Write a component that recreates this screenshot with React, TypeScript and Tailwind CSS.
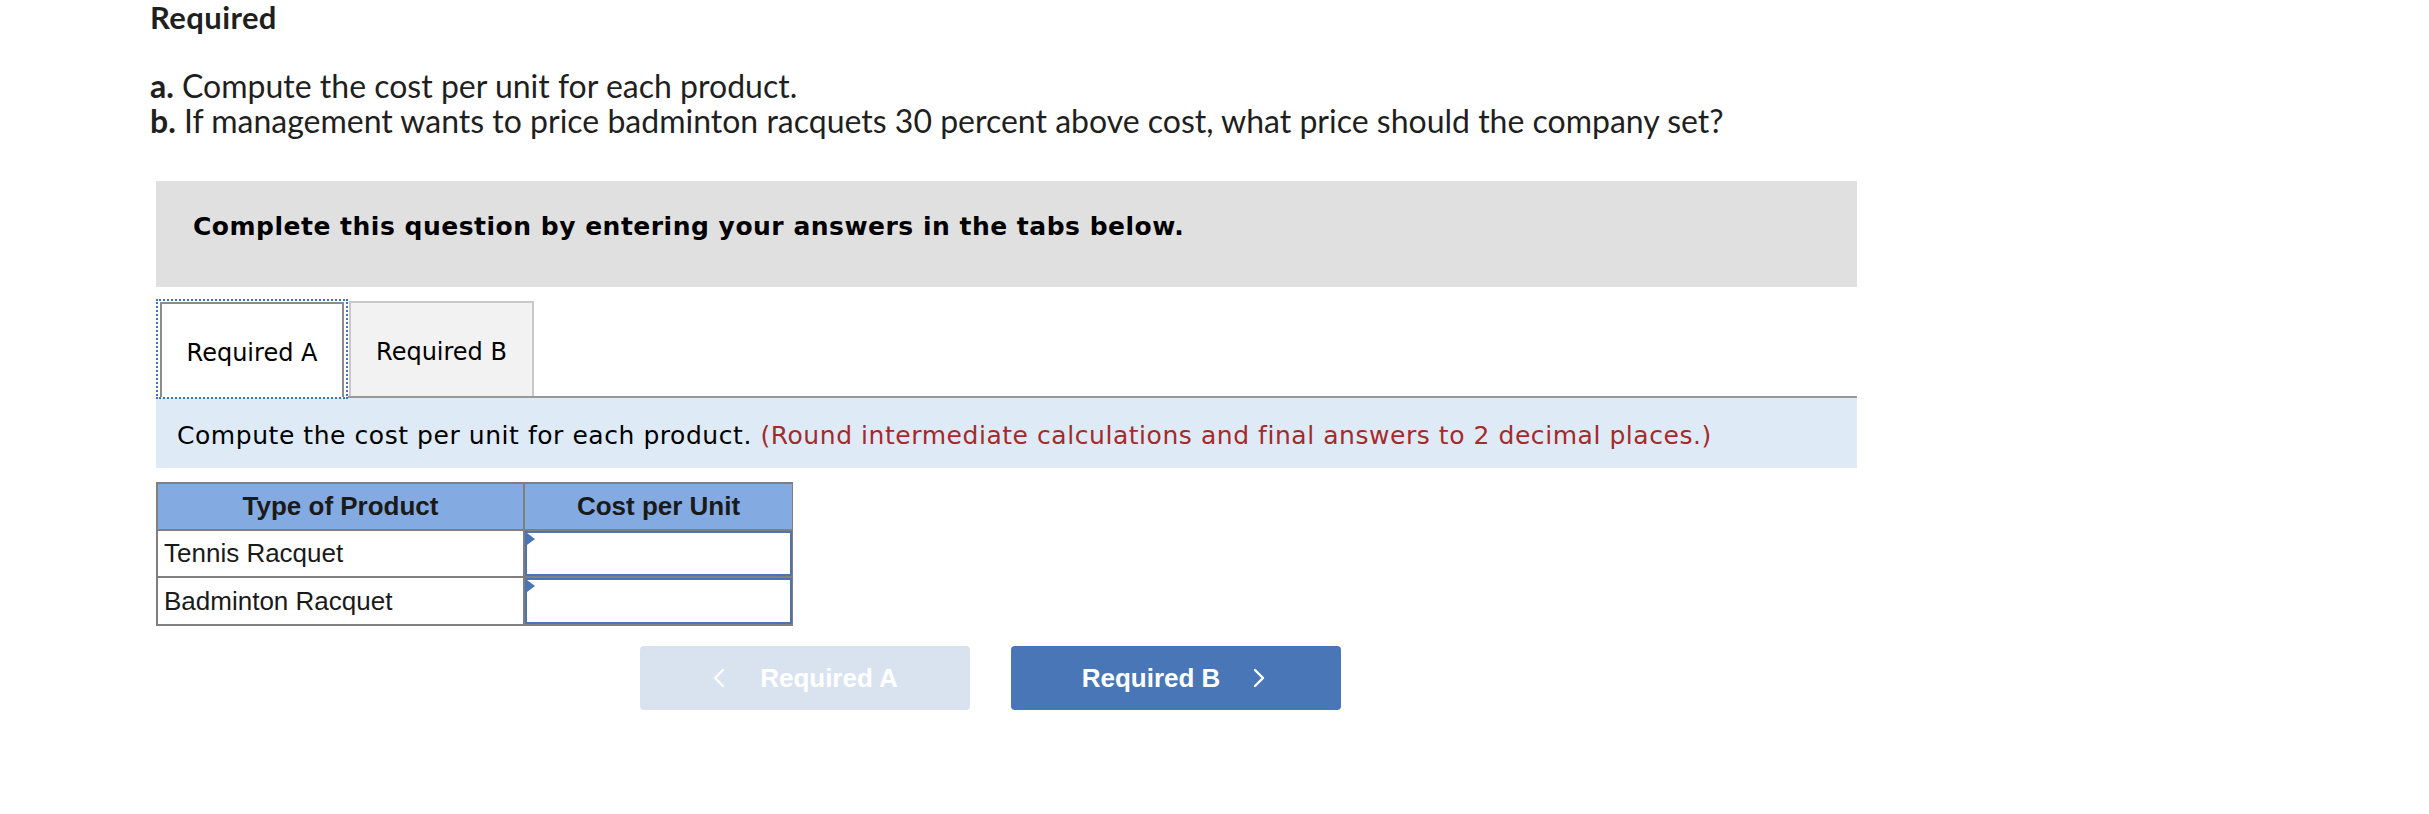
import React from "react";

function Chevron({ dir }: { dir: "left" | "right" }) {
  return (
    <svg width="14" height="22" viewBox="0 0 14 22" fill="none" className="shrink-0">
      {dir === "left" ? (
        <polyline points="11,3 3,11 11,19" stroke="white" strokeWidth="2.4" strokeLinecap="round" strokeLinejoin="round" />
      ) : (
        <polyline points="3,3 11,11 3,19" stroke="white" strokeWidth="2.4" strokeLinecap="round" strokeLinejoin="round" />
      )}
    </svg>
  );
}

export default function App() {
  return (
    <div className="min-h-[814px] w-[2429px] bg-white text-[#1f1f1f]">
      <div className="pl-[150px] font-['Lato',sans-serif]">
        <h2 className="pt-[1px] text-[31px] font-bold leading-[32px] tracking-[0.4px]">Required</h2>
        <div className="mt-[35px] text-[32px] leading-[35px]">
          <p>
            <span className="font-bold">a.</span> Compute the cost per unit for each product.
          </p>
          <p>
            <span className="font-bold">b.</span> If management wants to price badminton racquets 30 percent above cost, what price should the company set?
          </p>
        </div>
      </div>

      <div className="ml-[156px] mt-[43px] w-[1701px] font-['DejaVu_Sans',sans-serif]">
        <div className="h-[106px] bg-[#e0e0e0] pl-[37px] pt-[32px] text-[25px] font-bold leading-[28px] tracking-[0.5px] text-black">
          Complete this question by entering your answers in the tabs below.
        </div>

        <div className="mt-[12px] flex h-[99px] items-start">
          <div className="relative z-10 h-[100px] w-[192px] border-2 border-dotted border-[#3f72c0] pl-[2px] pt-[1px]">
            <div className="flex h-full w-[184px] items-center justify-center border-x-2 border-t-2 border-[#8c8c8c] bg-white pt-[4px] text-[24px] leading-[28px] text-black">
              Required A
            </div>
          </div>
          <div className="flex h-[99px] flex-1 items-end border-b-2 border-[#999]">
            <div className="ml-[1px] flex h-[95px] w-[185px] items-center justify-center border-x-2 border-t-2 border-[#c8c8c8] bg-[#f2f2f2] pt-[4px] text-[24px] leading-[28px] text-black">
              Required B
            </div>
          </div>
        </div>

        <div className="h-[70px] bg-[#deebf7] pl-[21px] pt-[24px] text-[25px] leading-[28px] tracking-[0.55px] text-black">
          Compute the cost per unit for each product.{" "}
          <span className="text-[#a52a2a]">(Round intermediate calculations and final answers to 2 decimal places.)</span>
        </div>

        <div className="mt-[14px] grid w-[637px] grid-cols-[365px_267px] grid-rows-[45px_45px_46px] gap-[2px] bg-[#7f7f7f] p-[2px] font-['Liberation_Sans',Arial,sans-serif] text-[26px] text-[#1a1a1a]">
          <div className="flex items-center justify-center bg-[#83abe1] font-bold">Type of Product</div>
          <div className="flex items-center justify-center bg-[#83abe1] font-bold">Cost per Unit</div>
          <div className="flex items-center bg-white pl-[6px]">Tennis Racquet</div>
          <div className="relative border-2 border-[#4a74b4] bg-white">
            <div className="absolute left-0 top-0 h-0 w-0 border-y-[6px] border-l-[8px] border-y-transparent border-l-[#4a74b4]" />
          </div>
          <div className="flex items-center bg-white pl-[6px]">Badminton Racquet</div>
          <div className="relative border-2 border-[#4a74b4] bg-white">
            <div className="absolute left-0 top-0 h-0 w-0 border-y-[6px] border-l-[8px] border-y-transparent border-l-[#4a74b4]" />
          </div>
        </div>

        <div className="ml-[484px] mt-[20px] flex gap-[41px] font-['Liberation_Sans',Arial,sans-serif] text-[26px] font-bold text-white">
          <button className="flex h-[64px] w-[330px] items-center justify-center gap-[34px] rounded-[4px] bg-[#d9e3f0]">
            <Chevron dir="left" />
            <span>Required A</span>
          </button>
          <button className="flex h-[64px] w-[330px] items-center justify-center gap-[32px] rounded-[4px] bg-[#4876b6] pr-[4px]">
            <span>Required B</span>
            <Chevron dir="right" />
          </button>
        </div>
      </div>
    </div>
  );
}
